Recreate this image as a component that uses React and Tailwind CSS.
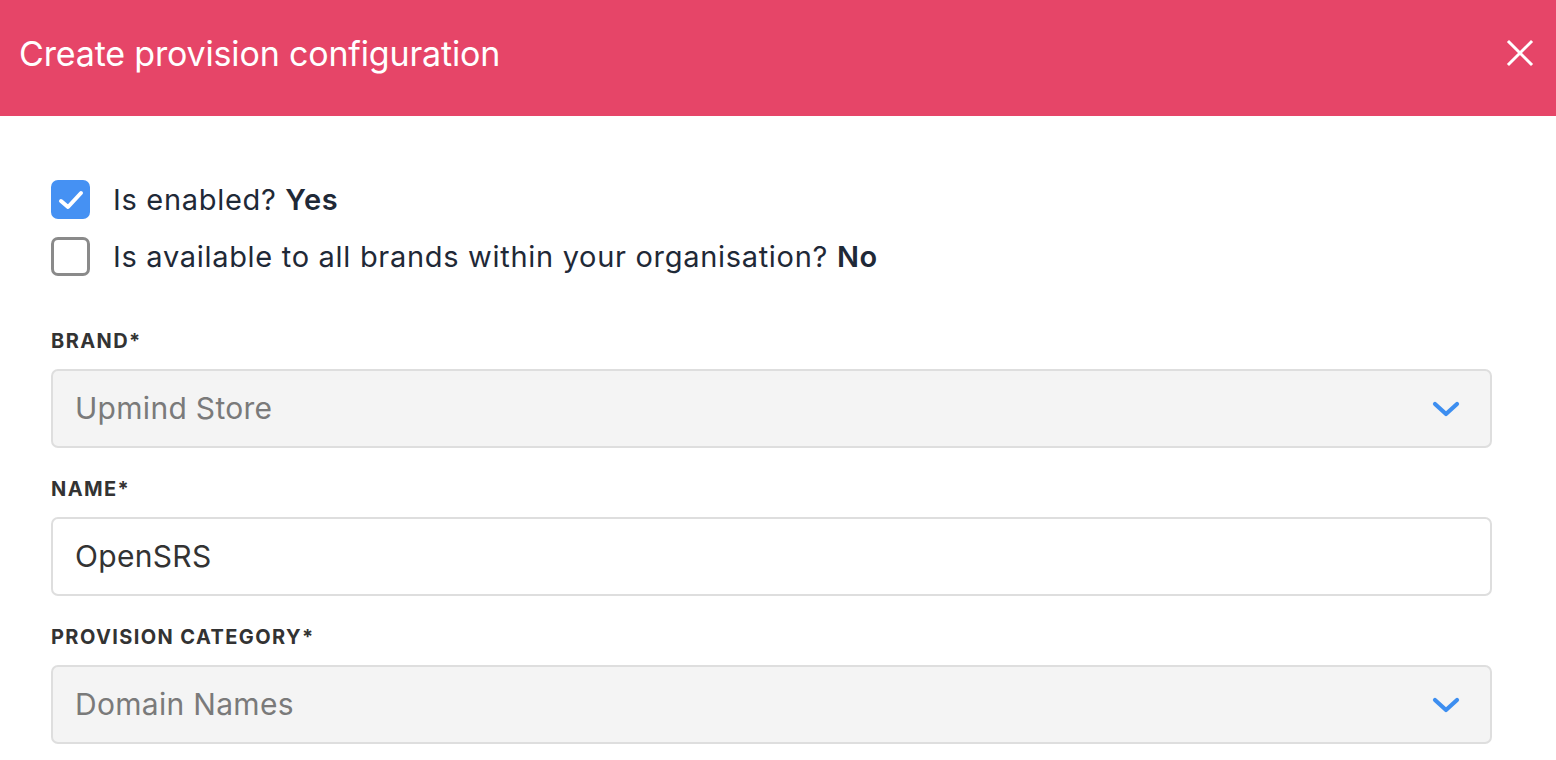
import React from "react";

function Chevron() {
  return (
    <svg width="28" height="18" viewBox="0 0 28 18" fill="none" className="shrink-0">
      <path d="M3 4 L14 14 L25 4" stroke="#3d8ef0" strokeWidth="4.2" strokeLinecap="round" strokeLinejoin="round" />
    </svg>
  );
}

function Check({ checked }) {
  if (checked) {
    return (
      <div className="w-[39px] h-[39px] rounded-[7px] bg-[#4591f3] flex items-center justify-center shrink-0">
        <svg width="26" height="22" viewBox="0 0 26 22" fill="none">
          <path d="M3 12 L10 18 L23 4" stroke="white" strokeWidth="4" strokeLinecap="round" strokeLinejoin="round" />
        </svg>
      </div>
    );
  }
  return <div className="w-[39px] h-[39px] rounded-[7px] border-[3px] border-[#8a8a8a] bg-white shrink-0" />;
}

function Field({ label, children }) {
  return (
    <div className="flex flex-col">
      <div className="text-[20px] font-bold tracking-[0.07em] text-[#333] leading-none h-[20px] mb-[18px]">{label}</div>
      {children}
    </div>
  );
}

export default function App() {
  return (
    <div className="w-[1556px] h-[760px] bg-white overflow-hidden" style={{ fontFamily: "Inter, 'Noto Sans', sans-serif" }}>
      <div className="h-[116px] bg-[#e64568] flex items-center justify-between pl-[19px] pr-[22px] pb-[10px]">
        <div className="text-white text-[34px] font-normal tracking-[-0.005em]">Create provision configuration</div>
        <svg width="28" height="28" viewBox="0 0 28 28" fill="none">
          <path d="M3 3 L25 25 M25 3 L3 25" stroke="white" strokeWidth="3" strokeLinecap="square" />
        </svg>
      </div>

      <div className="pl-[51px] pr-[64px] pt-[64px]">
        <div className="flex flex-col gap-[18px]">
          <div className="flex items-center gap-[23px] h-[39px]">
            <Check checked />
            <div className="text-[29px] tracking-[0.024em] text-[#1f2937] leading-none">Is enabled? <span className="font-semibold">Yes</span></div>
          </div>
          <div className="flex items-center gap-[23px] h-[39px]">
            <Check checked={false} />
            <div className="text-[29px] tracking-[0.024em] text-[#1f2937] leading-none">Is available to all brands within your organisation? <span className="font-semibold">No</span></div>
          </div>
        </div>

        <div className="mt-[55px] flex flex-col gap-[31px]">
          <Field label="BRAND*">
            <div className="h-[79px] rounded-[7px] border-2 border-[#dedede] bg-[#f4f4f4] flex items-center justify-between pl-[22px] pr-[30px]">
              <span className="text-[30px] tracking-[0.01em] text-[#7a7a7a]">Upmind Store</span>
              <Chevron />
            </div>
          </Field>
          <Field label="NAME*">
            <div className="h-[79px] rounded-[7px] border-2 border-[#dedede] bg-white flex items-center pl-[22px] pr-[30px]">
              <span className="text-[30px] tracking-[0.01em] text-[#333]">OpenSRS</span>
            </div>
          </Field>
          <Field label="PROVISION CATEGORY*">
            <div className="h-[79px] rounded-[7px] border-2 border-[#dedede] bg-[#f4f4f4] flex items-center justify-between pl-[22px] pr-[30px]">
              <span className="text-[30px] tracking-[0.01em] text-[#7a7a7a]">Domain Names</span>
              <Chevron />
            </div>
          </Field>
        </div>
      </div>
    </div>
  );
}
